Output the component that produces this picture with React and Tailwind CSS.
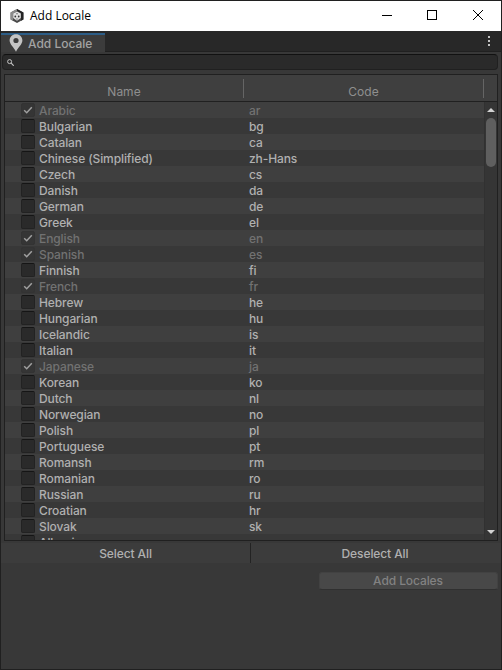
const locales = [
  ['Arabic', 'ar', true],
  ['Bulgarian', 'bg'],
  ['Catalan', 'ca'],
  ['Chinese (Simplified)', 'zh-Hans'],
  ['Czech', 'cs'],
  ['Danish', 'da'],
  ['German', 'de'],
  ['Greek', 'el'],
  ['English', 'en', true],
  ['Spanish', 'es', true],
  ['Finnish', 'fi'],
  ['French', 'fr', true],
  ['Hebrew', 'he'],
  ['Hungarian', 'hu'],
  ['Icelandic', 'is'],
  ['Italian', 'it'],
  ['Japanese', 'ja', true],
  ['Korean', 'ko'],
  ['Dutch', 'nl'],
  ['Norwegian', 'no'],
  ['Polish', 'pl'],
  ['Portuguese', 'pt'],
  ['Romansh', 'rm'],
  ['Romanian', 'ro'],
  ['Russian', 'ru'],
  ['Croatian', 'hr'],
  ['Slovak', 'sk'],
  ['Albanian', 'sq'],
];

function TitleBar() {
  return (
    <div className="flex h-[30px] shrink-0 items-center bg-white text-black">
      <svg className="ml-[9px] h-[14px] w-[14px]" viewBox="0 0 14 14">
        <path d="M7 0 13.4 3.4V10.6L7 14 .6 10.6V3.4Z" fill="#4a4a4a" />
        <path d="M7 0 .6 3.4V10.6L3 11.8V4.5L7 2Z" fill="#8b8b8b" />
        <path d="M7 0 13.4 3.4V10.6L11 11.8V4L7 2Z" fill="#242424" />
        <path d="M7 2.4 10.8 4.6V9L7 11.8 3.2 9V4.6Z" fill="#e2e2e2" />
        <circle cx="5.3" cy="7.5" r=".9" fill="#333" />
        <circle cx="8.7" cy="7.5" r=".9" fill="#333" />
        <circle cx="7" cy="4.8" r=".7" fill="#555" />
        <path d="M7 9.300v1.400" stroke="#444" strokeWidth=".8" />
      </svg>
      <span className="ml-[6px] font-['Open_Sans',sans-serif] text-[12px] leading-4">Add Locale</span>
      <svg className="ml-auto h-[30px] w-[137px]" viewBox="0 0 137 30" fill="none" stroke="#000" shapeRendering="crispEdges">
        <path d="M18 14.5h10" />
        <rect x="63.5" y="9.5" width="9" height="9" />
        <path d="M109 9l10 10M119 9l-10 10" shapeRendering="auto" />
      </svg>
    </div>
  );
}

function TabBar() {
  return (
    <div className="flex h-[21px] shrink-0 justify-between border-b border-[#202020] bg-[#282828] pt-[2px]">
      <div className="relative -mb-px flex h-[19px] w-[104px] items-center border-t-2 border-[#2c5d87] bg-[#3c3c3c]">
        <svg className="absolute left-[8px] top-[-1px] h-[18px] w-[14px]" viewBox="0 0 14 18">
          <path
            fillRule="evenodd"
            d="M7 .3C3.300.3.6 3 .6 6.600c0 3.600 4 6.600 6.400 11.200 2.400-4.600 6.400-7.600 6.400-11.200C13.400 3 10.700.3 7 .3ZM7 3.900a2.600 2.600 0 1 1 0 5.200 2.600 2.600 0 0 1 0-5.200Z"
            fill="#c4c4c4"
          />
        </svg>
        <span className="ml-[27px] text-[12px] font-medium leading-4 text-[#a3a3a3]">Add Locale</span>
      </div>
      <svg className="mr-[11px] mt-[3px] h-[10px] w-[2px]" viewBox="0 0 2 10" fill="#c4c4c4">
        <rect width="2" height="2" />
        <rect y="4" width="2" height="2" />
        <rect y="8" width="2" height="2" />
      </svg>
    </div>
  );
}

function Checkbox({ checked }) {
  return (
    <span
      className={
        'flex h-[14px] w-[14px] shrink-0 items-center justify-center rounded-[2px] border ' +
        (checked ? 'border-[#333333] bg-[#353535]' : 'border-[#222222] border-t-[#151515] bg-[#2a2a2a]')
      }
    >
      {checked && (
        <svg className="h-[10px] w-[10px]" viewBox="0 0 10 10" fill="none" stroke="#a0a0a0" strokeWidth="1.5">
          <path d="M1.200 5.300 3.700 7.700 8.800 2.200" />
        </svg>
      )}
    </span>
  );
}

function LocaleTable() {
  return (
    <div className="mx-[3px] flex h-[467px] shrink-0 flex-col border border-[#202020] bg-[#3f3f3f]">
      <div className="flex h-[27px] shrink-0 border-b border-[#202020] text-[#8f8f8f]">
        <div className="w-[238px] pt-[9px] text-center">Name</div>
        <div className="mt-[4px] h-[19px] w-px bg-[#656565]" />
        <div className="w-[239px] pt-[9px] text-center">Code</div>
        <div className="mt-[4px] h-[19px] w-px bg-[#656565]" />
      </div>
      <div className="flex min-h-0 flex-1">
        <div className="flex-1 overflow-hidden">
          {locales.map(([name, code, added], i) => (
            <div
              key={code}
              className={
                'flex h-4 items-center font-medium tracking-[-0.1px] ' +
                (i % 2 ? 'bg-[#383838] ' : 'bg-[#3f3f3f] ') +
                (added ? 'text-[#727272]' : 'text-[#b0b0b0]')
              }
            >
              <div className="flex w-[244px] items-center pl-4">
                <Checkbox checked={added} />
                <span className="ml-1 pt-px leading-4">{name}</span>
              </div>
              <span className="pt-px leading-4">{code}</span>
            </div>
          ))}
        </div>
        <div className="flex w-[13px] flex-col items-center border-l border-[#313131] bg-[#353535]">
          <svg className="mt-[6px] h-[4px] w-[8px] shrink-0" viewBox="0 0 8 4" fill="#d2d2d2">
            <path d="M4 0 8 4H0Z" />
          </svg>
          <div className="mt-[6px] h-[49px] w-[10px] rounded-full bg-[#5f5f5f]" />
          <svg className="mb-[6px] mt-auto h-[4px] w-[8px] shrink-0" viewBox="0 0 8 4" fill="#d2d2d2">
            <path d="M0 0H8L4 4Z" />
          </svg>
        </div>
      </div>
    </div>
  );
}

export default function App() {
  return (
    <div className="flex h-[670px] w-[502px] flex-col overflow-hidden border border-[#202020] bg-[#383838] font-['Inter',sans-serif] text-[12px] leading-4">
      <TitleBar />
      <TabBar />
      <div className="mb-1 ml-px mr-[3px] mt-[2px] flex h-4 shrink-0 items-center rounded-[4px] border border-[#202020] border-t-[#111111] bg-[#2a2a2a] pl-1">
        <svg className="h-[7px] w-[7px]" viewBox="0 0 7 7" fill="none" stroke="#c4c4c4">
          <circle cx="2.600" cy="2.600" r="2" />
          <path d="M4.200 4.200 6.700 6.700" strokeWidth="1.200" />
        </svg>
      </div>
      <LocaleTable />
      <div className="mt-[2px] flex h-5 shrink-0 bg-[#3c3c3c] pt-px text-[#b0b0b0]">
        <button className="-mt-px w-[250px] border-r border-[#232323] pt-px text-center font-medium tracking-[-0.1px]">Select All</button>
        <button className="-mt-px flex-1 pr-[2px] pt-px text-center font-medium tracking-[-0.1px]">Deselect All</button>
      </div>
      <button className="ml-auto mr-[3px] mt-[9px] h-[18px] w-[179px] shrink-0 rounded-[3px] border border-[#424242] border-b-[#303030] bg-[#484848] pr-px font-medium leading-4 tracking-[-0.1px] text-[#828282]">
        Add Locales
      </button>
    </div>
  );
}
